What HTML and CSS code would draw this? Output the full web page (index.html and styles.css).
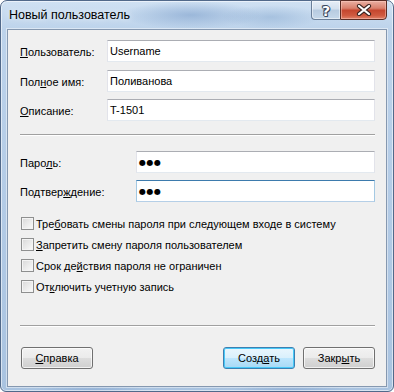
FILE: index.html
```html
<!DOCTYPE html>
<html lang="ru">
<head>
<meta charset="utf-8">
<title>Новый пользователь</title>
<link rel="stylesheet" href="styles.css">
</head>
<body>
<div class="window">
  <div class="titlebar">
    <span class="title">Новый пользователь</span>
    <div class="caption-btns">
      <div class="cap help"><span class="qmark">?</span></div>
      <div class="cap close">
        <svg width="16" height="12" viewBox="0 0 16 12">
          <path d="M3 2 L13 10 M13 2 L3 10" stroke="#3b2420" stroke-width="4.2" stroke-linecap="round"/>
          <path d="M3 2 L13 10 M13 2 L3 10" stroke="#ffffff" stroke-width="2.2" stroke-linecap="round"/>
        </svg>
      </div>
    </div>
  </div>
  <div class="client">
    <div class="row r1">
      <span class="label lw1"><u>П</u>ользователь:</span>
      <div class="field">Username</div>
    </div>
    <div class="row r2">
      <span class="label lw1">Пол<u>н</u>ое имя:</span>
      <div class="field">Поливанова</div>
    </div>
    <div class="row r3">
      <span class="label lw1"><u>О</u>писание:</span>
      <div class="field">T-1501</div>
    </div>
    <div class="sep sep1"></div>
    <div class="row r4">
      <span class="label lw2">Паро<u>л</u>ь:</span>
      <div class="field dots">●●●</div>
    </div>
    <div class="row r5">
      <span class="label lw2">Подтвер<u>ж</u>дение:</span>
      <div class="field dots focus">●●●</div>
    </div>
    <div class="checks">
      <div class="check"><span class="box"></span><span>Тре<u>б</u>овать смены пароля при следующем входе в систему</span></div>
      <div class="check"><span class="box"></span><span><u>З</u>апретить смену пароля пользователем</span></div>
      <div class="check"><span class="box"></span><span>Срок де<u>й</u>ствия пароля не ограничен</span></div>
      <div class="check"><span class="box"></span><span>От<u>к</u>лючить учетную запись</span></div>
    </div>
    <div class="sep sep2"></div>
    <div class="footer">
      <div class="btn"><u>С</u>правка</div>
      <div class="spacer"></div>
      <div class="btn default">Созд<u>а</u>ть</div>
      <div class="btn">Закр<u>ы</u>ть</div>
    </div>
  </div>
</div>
</body>
</html>
```

FILE: styles.css
```css
html, body {
  margin: 0;
  padding: 0;
  background: #ffffff;
}

body {
  font-family: "Liberation Sans", Arial, sans-serif;
  font-size: 11px;
  color: #000;
}

.window {
  box-sizing: border-box;
  width: 394px;
  height: 392px;
  border: 1px solid #51698a;
  border-radius: 7px 7px 6px 6px;
  padding: 0 6px 4px 6px;
  display: flex;
  flex-direction: column;
  background:
    radial-gradient(ellipse 70px 14px at 190px 14px, rgba(120,155,200,0.55), rgba(120,155,200,0) 100%),
    radial-gradient(ellipse 50px 12px at 270px 16px, rgba(130,165,205,0.45), rgba(130,165,205,0) 100%),
    radial-gradient(ellipse 60px 6px at 90px 390px, rgba(120,155,200,0.5), rgba(120,155,200,0) 100%),
    radial-gradient(ellipse 60px 6px at 290px 390px, rgba(120,155,200,0.5), rgba(120,155,200,0) 100%),
    linear-gradient(to bottom, #d0e1f3 0px, #bdd3eb 28px, #b3cbe6 200px, #a9c3e0 100%);
  box-shadow: inset 0 0 0 1px rgba(255,255,255,0.55);
}

.titlebar {
  height: 28px;
  display: flex;
  justify-content: space-between;
  align-items: flex-start;
}

.title {
  font-family: "Liberation Sans", Arial, sans-serif;
  font-size: 12.5px;
  color: #000;
  padding-top: 7px;
  padding-left: 2px;
  text-shadow: 0 0 6px rgba(255,255,255,0.9);
}

.caption-btns {
  display: flex;
  margin-top: -1px;
}

.cap {
  box-sizing: border-box;
  height: 20px;
  display: flex;
  align-items: center;
  justify-content: center;
}

.help {
  width: 29px;
  border: 1px solid #6a7f99;
  border-right: none;
  border-radius: 0 0 0 4px;
  background: linear-gradient(to bottom, #e6eef7 0%, #d3e0ee 45%, #b7cbe0 50%, #c6d8ea 100%);
  box-shadow: inset 0 0 0 1px rgba(255,255,255,0.5);
}

.qmark {
  font-family: "DejaVu Sans", sans-serif;
  font-weight: bold;
  font-size: 14px;
  color: #fff;
  line-height: 1;
  margin-top: 1px;
  text-shadow: 1px 0 0 #3b4a60, -1px 0 0 #3b4a60, 0 1px 0 #3b4a60, 0 -1px 0 #3b4a60, 1px 1px 0 #3b4a60, -1px -1px 0 #3b4a60;
}

.close {
  width: 47px;
  border: 1px solid #5a2c24;
  border-radius: 0 0 4px 0;
  background: linear-gradient(to bottom, #eab0a3 0%, #d9806d 40%, #c5472f 52%, #cf5a40 80%, #e0826a 100%);
  box-shadow: inset 0 0 0 1px rgba(255,210,200,0.45);
}

.close svg {
  display: block;
}

.client {
  flex: 1;
  box-sizing: border-box;
  border: 1px solid #8598b0;
  background: #f0f0f0;
  padding: 0 11px 0 12px;
  display: flex;
  flex-direction: column;
  box-shadow: 0 0 0 1px rgba(255,255,255,0.45);
}

.row {
  display: flex;
  align-items: center;
  height: 22px;
}

.r1 { margin-top: 10px; }
.r2 { margin-top: 8px; }
.r3 { margin-top: 7px; }
.r4 { margin-top: 15px; }
.r5 { margin-top: 7px; }

.label {
  flex: none;
  white-space: nowrap;
  padding-top: 1px;
}

.lw1 { width: 87px; }
.lw2 { width: 116px; }

.field {
  flex: 1;
  box-sizing: border-box;
  height: 22px;
  background: #fff;
  border: 1px solid #e2e3ea;
  border-top-color: #abadb3;
  border-bottom-color: #e3e9ef;
  padding: 0 2px;
  display: flex;
  align-items: center;
  white-space: nowrap;
}

.field.dots {
  font-family: "DejaVu Sans", sans-serif;
  font-size: 8px;
  letter-spacing: 0.5px;
  padding-left: 2px;
  padding-top: 1px;
}

.field.focus {
  border-color: #b5cfe7;
  border-top-color: #3d7bad;
  border-left-color: #a4c9e3;
  border-right-color: #a4c9e3;
}

.sep {
  height: 0;
  border-top: 1px solid #a0a0a0;
  border-bottom: 1px solid #ffffff;
}

.sep1 { margin-top: 13px; }
.sep2 { margin-top: 28px; }

.checks {
  margin-top: 11px;
  display: flex;
  flex-direction: column;
}

.check {
  height: 21px;
  display: flex;
  align-items: center;
  white-space: nowrap;
}

.box {
  flex: none;
  box-sizing: border-box;
  width: 13px;
  height: 13px;
  margin-left: 1px;
  margin-right: 2px;
  border: 1px solid #8e8f8f;
  background: linear-gradient(135deg, #d8d8d8 0%, #eaeaea 50%, #fbfbfb 100%);
  box-shadow: inset 0 0 0 1px #f4f4f4;
}

.footer {
  margin-top: 20px;
  display: flex;
  gap: 8px;
  padding-left: 1px;
}

.spacer {
  flex: 1;
}

.btn {
  box-sizing: border-box;
  width: 72px;
  height: 22px;
  border: 1px solid #707070;
  border-radius: 3px;
  background: linear-gradient(to bottom, #f2f2f2 0%, #ebebeb 50%, #dddddd 50%, #cfcfcf 100%);
  box-shadow: inset 0 0 0 1px rgba(255,255,255,0.7);
  display: flex;
  align-items: center;
  justify-content: center;
  white-space: nowrap;
}

.btn.default {
  border-color: #3c7fb1;
  background: linear-gradient(to bottom, #eaf6fd 0%, #d9f0fc 50%, #bee6fd 50%, #a7d9f5 100%);
  box-shadow: inset 0 0 0 1px #48c9f8;
}
```
